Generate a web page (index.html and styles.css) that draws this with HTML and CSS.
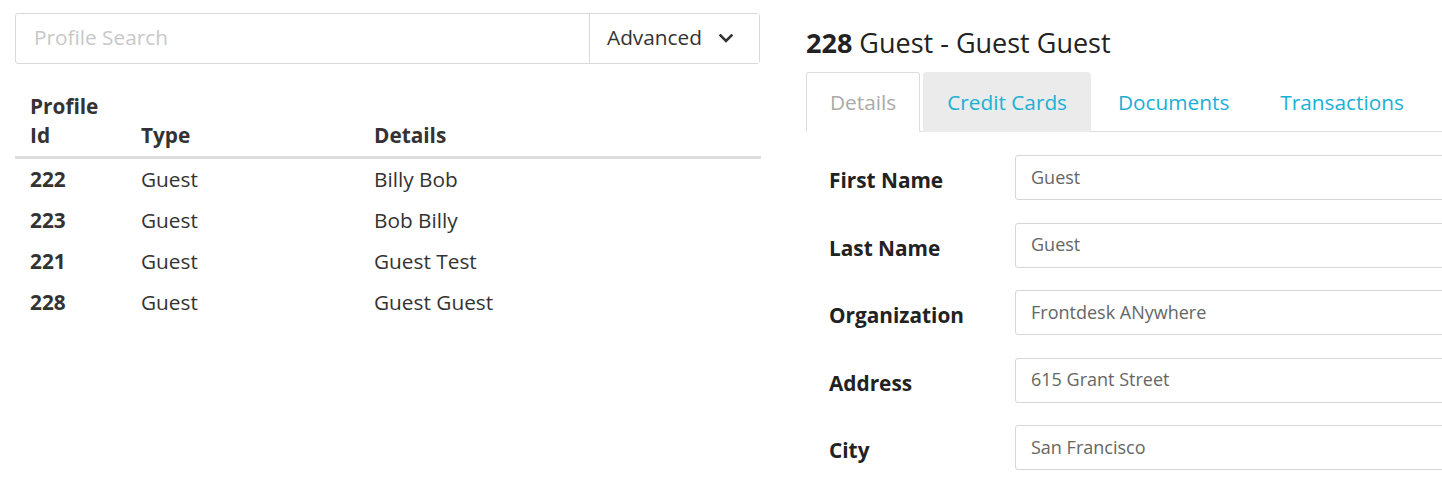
FILE: index.html
```html
<!DOCTYPE html>
<html>
<head>
<meta charset="utf-8">
<link rel="stylesheet" href="styles.css">
</head>
<body>
<div class="page">
  <section class="left">
    <div class="search">
      <input class="search-input" type="text" placeholder="Profile Search">
      <button class="adv-btn">Advanced
        <svg class="chev" width="14" height="9" viewBox="0 0 14 9"><path d="M1.5 1.5 L7 7 L12.5 1.5" fill="none" stroke="#333" stroke-width="2.6" stroke-linecap="square"/></svg>
      </button>
    </div>
    <table class="profiles">
      <thead>
        <tr><th class="c1">Profile<br>Id</th><th class="c2">Type</th><th class="c3">Details</th></tr>
      </thead>
      <tbody>
        <tr><td class="id">222</td><td>Guest</td><td>Billy Bob</td></tr>
        <tr><td class="id">223</td><td>Guest</td><td>Bob Billy</td></tr>
        <tr><td class="id">221</td><td>Guest</td><td>Guest Test</td></tr>
        <tr><td class="id">228</td><td>Guest</td><td>Guest Guest</td></tr>
      </tbody>
    </table>
  </section>
  <section class="right">
    <h3 class="title"><b>228</b> Guest - Guest Guest</h3>
    <ul class="tabs">
      <li class="tab active">Details</li>
      <li class="tab hover">Credit Cards</li>
      <li class="tab">Documents</li>
      <li class="tab">Transactions</li>
    </ul>
    <form class="form">
      <div class="row"><label>First Name</label><input class="field" type="text" value="Guest"></div>
      <div class="row"><label>Last Name</label><input class="field" type="text" value="Guest"></div>
      <div class="row"><label>Organization</label><input class="field" type="text" value="Frontdesk ANywhere"></div>
      <div class="row"><label>Address</label><input class="field" type="text" value="615 Grant Street"></div>
      <div class="row"><label>City</label><input class="field" type="text" value="San Francisco"></div>
    </form>
  </section>
</div>
</body>
</html>
```
FILE: styles.css
```css
html, body {
  margin: 0;
  padding: 0;
  background: #fff;
  overflow: hidden;
}
body {
  font-family: "Open Sans", "Noto Sans", sans-serif;
  font-size: 20.8px;
  color: #333;
  width: 1442px;
  height: 481px;
}
.page {
  display: flex;
  align-items: flex-start;
  padding-left: 15px;
  gap: 45px;
}
.left {
  width: 746px;
  flex: none;
  padding-top: 13px;
}
.search {
  display: flex;
  width: 745px;
  height: 51px;
  box-sizing: border-box;
  border: 1px solid #d9d9d9;
  border-radius: 3px;
}
.search-input {
  flex: 1;
  border: 0;
  outline: none;
  font-family: inherit;
  font-size: 20.8px;
  padding: 0 0 3px 18px;
  color: #555;
  background: transparent;
  min-width: 0;
}
.search-input::placeholder {
  color: #c8c8c8;
}
.adv-btn {
  width: 170px;
  flex: none;
  border: 0;
  border-left: 1px solid #d9d9d9;
  background: #fff;
  font-family: inherit;
  font-size: 20.8px;
  color: #333;
  display: flex;
  align-items: center;
  padding: 0 0 4px 17px;
  gap: 17px;
}
.chev {
  margin-top: 4px;
}
.profiles {
  margin-top: 22px;
  width: 746px;
  border-collapse: collapse;
}
.profiles th, .profiles td {
  text-align: left;
  padding: 6px 0 6px 15px;
  line-height: 29px;
  vertical-align: bottom;
}
.profiles th {
  font-weight: 700;
  border-bottom: 3px solid #dddddd;
}
.profiles .c1 { width: 96px; }
.profiles .c2 { width: 218px; }
.profiles td.id { font-weight: 700; }
.right {
  width: 700px;
  flex: none;
}
.title {
  margin: 28px 0 14px 0;
  font-size: 27px;
  font-weight: 400;
  line-height: 30px;
  color: #222;
}
.title b { font-weight: 700; }
.tabs {
  list-style: none;
  margin: 0;
  padding: 0;
  display: flex;
  border-bottom: 1px solid #dddddd;
}
.tab {
  padding: 14px 23px;
  line-height: 30px;
  border: 1px solid transparent;
  border-radius: 3px 3px 0 0;
  margin-right: 3px;
  margin-bottom: -1px;
  color: #1ab0d6;
}
.tab.active {
  color: #aaa;
  border-color: #dddddd #dddddd transparent #dddddd;
  background: #fff;
}
.tab.hover {
  background: #ebebeb;
  border-color: #ebebeb;
}
.form {
  padding: 23px 0 0 23px;
  display: flex;
  flex-direction: column;
  gap: 22.5px;
}
.row {
  display: grid;
  grid-template-columns: 186px 1fr;
  align-items: start;
}
.row label {
  font-weight: 700;
  line-height: 29px;
  padding-top: 11px;
  color: #222;
}
.field {
  height: 45px;
  box-sizing: border-box;
  border: 1px solid #d6d6d6;
  border-radius: 3px;
  font-family: inherit;
  font-size: 18px;
  color: #666;
  padding: 0 15px 2px 15px;
  width: 100%;
  outline: none;
}
```
